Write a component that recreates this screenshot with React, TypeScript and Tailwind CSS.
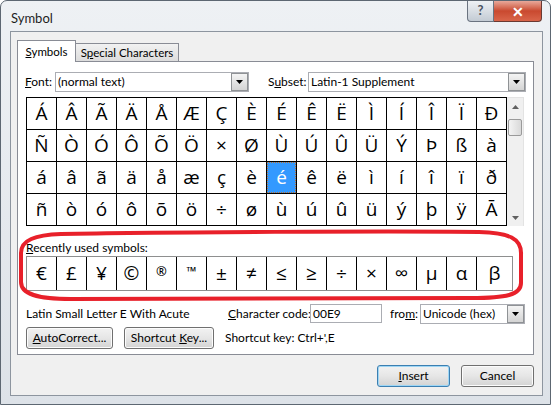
import React from 'react';

const rows = [
  'ÁÂÃÄÅÆÇÈÉÊËÌÍÎÏÐ',
  'ÑÒÓÔÕÖ×ØÙÚÛÜÝÞßà',
  'áâãäåæçèéêëìíîïð',
  'ñòóôõö÷øùúûüýþÿĀ',
].map((r) => Array.from(r));

const recent = ['€', '£', '¥', '©', '®', '™', '±', '≠', '≤', '≥', '÷', '×', '∞', 'µ', 'α', 'β'];

function Arrow() {
  return (
    <svg width="7" height="4" viewBox="0 0 7 4">
      <path d="M0 0h7L3.5 4z" fill="#000" />
    </svg>
  );
}

function Combo({ className, text }: { className: string; text: string }) {
  return (
    <div className={`flex h-[20px] border border-[#abadb3] bg-white ${className}`}>
      <div className="flex-1 whitespace-nowrap pl-[2px] leading-[18px]">{text}</div>
      <div className="flex w-[17px] items-center justify-center border border-[#8f9295] bg-gradient-to-b from-[#f4f4f4] to-[#d4d4d4]">
        <Arrow />
      </div>
    </div>
  );
}

function Button({ className, children, isDefault }: { className: string; children: React.ReactNode; isDefault?: boolean }) {
  return (
    <div
      className={`flex h-[22px] items-center justify-center whitespace-nowrap rounded-[3px] border bg-gradient-to-b from-[#f2f2f2] via-[#e6e6e6] to-[#d3d3d3] ${
        isDefault ? 'border-[#3c7fb1] shadow-[inset_0_0_0_1px_#9ed6f5]' : 'border-[#707070] shadow-[inset_0_0_0_1px_#fcfcfc]'
      } ${className}`}
    >
      {children}
    </div>
  );
}

export default function App() {
  return (
    <div className="relative h-[405px] w-[551px] overflow-hidden rounded-t-[7px] border border-[#5d6772] bg-gradient-to-b from-[#eef1f4] to-[#dde2e8] font-['Lato',sans-serif] text-[12px] text-black">
      {/* title bar */}
      <div className="flex h-[30px] items-start justify-between">
        <div className="pl-[10px] pt-[8px] text-[13px] text-[#1e1e1e]">Symbol</div>
        <div className="mr-[8px] flex h-[21px]">
          <div className="flex w-[27px] items-center justify-center rounded-bl-[4px] border border-t-0 border-[#6a7380] bg-gradient-to-b from-[#eef1f4] to-[#c3cbd4] text-[13px] font-bold text-[#4a5360]">
            ?
          </div>
          <div className="flex w-[48px] items-center justify-center rounded-br-[4px] border border-l-0 border-t-0 border-[#6a3a32] bg-gradient-to-b from-[#e7a89a] via-[#c9492f] to-[#d9654a] text-[14px] font-bold text-white">
            ✕
          </div>
        </div>
      </div>

      {/* client area */}
      <div className="ml-[9px] flex h-[365px] w-[533px] flex-col border border-[#8d959f] bg-[#f0f0f0] pl-[6px] pr-[8px] pt-[8px]">
        {/* tabs */}
        <div className="flex h-[21px] items-end whitespace-nowrap text-[11.5px]">
          <div className="relative z-10 mb-[-1px] flex h-[22px] w-[59px] items-center justify-center border border-b-0 border-[#898c95] bg-white">
            <span>
              <u>S</u>ymbols
            </span>
          </div>
          <div className="flex h-[18px] w-[103px] items-center justify-center border border-l-0 border-b-0 border-[#898c95] bg-gradient-to-b from-[#f2f2f2] to-[#dcdcdc]">
            <span>
              S<u>p</u>ecial Characters
            </span>
          </div>
        </div>

        {/* panel */}
        <div className="flex h-[294px] flex-col whitespace-nowrap border border-[#898c95] bg-white pl-[7px] pt-[10px]">
          <div className="flex h-[20px] items-center">
            <div className="w-[30px]">
              <u>F</u>ont:
            </div>
            <Combo className="w-[194px]" text="(normal text)" />
            <div className="ml-[19px] w-[40px]">
              S<u>u</u>bset:
            </div>
            <Combo className="w-[218px]" text="Latin-1 Supplement" />
          </div>

          <div className="ml-[1px] mt-[5px] flex">
            <div className="border-l border-t border-black">
              {rows.map((r, ri) => (
                <div key={ri} className="flex">
                  {r.map((c, ci) => {
                    const sel = ri === 2 && ci === 8;
                    return (
                      <div
                        key={ci}
                        className="flex h-[32px] w-[30px] items-center justify-center border-b border-r border-black"
                      >
                        <div
                          className={`flex h-full w-full items-center justify-center font-['Open_Sans',sans-serif] text-[19px] leading-none ${
                            sel ? 'border border-dotted border-[#c0702a] bg-[#3399ff] text-white' : ''
                          }`}
                        >
                          {c}
                        </div>
                      </div>
                    );
                  })}
                </div>
              ))}
            </div>
            {/* scrollbar */}
            <div className="flex h-[129px] w-[17px] flex-col items-center border-r border-t border-[#e3e3e3] bg-[#f0f0f0]">
              <div className="flex h-[17px] w-full items-center justify-center">
                <svg width="7" height="4" viewBox="0 0 7 4">
                  <path d="M0 4h7L3.5 0z" fill="#606060" />
                </svg>
              </div>
              <div className="mt-[4px] h-[17px] w-[14px] rounded-[2px] border border-[#9a9a9a] bg-gradient-to-r from-[#f4f4f4] to-[#d9d9d9]" />
              <div className="flex-1" />
              <div className="flex h-[17px] w-full items-center justify-center">
                <svg width="7" height="4" viewBox="0 0 7 4">
                  <path d="M0 0h7L3.5 4z" fill="#606060" />
                </svg>
              </div>
            </div>
          </div>

          <div className="ml-[1px] mt-[14px] h-[15px] leading-[15px]">
            <u>R</u>ecently used symbols:
          </div>
          <div className="ml-[1px] mt-[1px] flex h-[35px] w-[487px] border border-[#8e8f8f] font-['Open_Sans',sans-serif]">
            {recent.map((c, i) => {
              const small = c === '®' || c === '™';
              return (
                <div
                  key={i}
                  className={`flex h-full justify-center leading-none ${
                    small ? 'items-start pt-[8px] text-[13px] font-semibold' : 'items-center text-[19px]'
                  } ${i === recent.length - 1 ? 'flex-1' : 'w-[30px] border-r border-black'}`}
                >
                  {c}
                </div>
              );
            })}
          </div>

          <div className="ml-[1px] mt-[13px] flex h-[19px] items-center">
            <div className="w-[202px]">Latin Small Letter E With Acute</div>
            <div className="w-[82px]">
              <u>C</u>haracter code:
            </div>
            <div className="h-[19px] w-[72px] border border-[#abadb3] bg-white pl-[2px] leading-[17px]">00E9</div>
            <div className="ml-[8px] w-[30px]">
              fro<u>m</u>:
            </div>
            <Combo className="w-[105px]" text="Unicode (hex)" />
          </div>

          <div className="ml-[1px] mt-[4px] flex items-center">
            <Button className="w-[87px]">
              <span>
                <u>A</u>utoCorrect...
              </span>
            </Button>
            <Button className="ml-[11px] w-[90px]">
              <span>
                Shortcut <u>K</u>ey...
              </span>
            </Button>
            <div className="ml-[11px]">Shortcut key: Ctrl+',E</div>
          </div>
        </div>

        {/* dialog buttons */}
        <div className="mt-[10px] flex justify-end gap-[11px]">
          <Button className="w-[73px]" isDefault>
            <span>
              <u>I</u>nsert
            </span>
          </Button>
          <Button className="w-[73px]">Cancel</Button>
        </div>
      </div>

      {/* hand-drawn annotation */}
      <svg className="pointer-events-none absolute left-0 top-0" width="551" height="405" viewBox="0 0 551 405">
        <path
          d="M60 233 C150 231 400 230 478 231 C508 232 521 237 520 254 L520 282 C520 294 505 297 470 297 L70 298 C36 298 20 293 20 281 L20 252 C20 239 34 234 60 233 Z"
          fill="none"
          stroke="#e8202a"
          strokeWidth="4"
        />
      </svg>
    </div>
  );
}
